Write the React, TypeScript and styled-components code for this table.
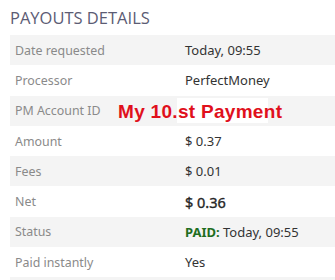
import React from "react";
import styled, { createGlobalStyle } from "styled-components";

const GlobalStyle = createGlobalStyle`
  body {
    margin: 0;
    background: #ffffff;
    font-family: "Noto Sans", "DejaVu Sans", sans-serif;
  }
`;

const Panel = styled.div`
  padding: 8px 0 0 10px;
  width: 335px;
  height: 280px;
  box-sizing: border-box;
  overflow: hidden;
`;

const Heading = styled.h2`
  margin: 0 0 7px 0;
  font-family: "Open Sans", "Noto Sans", sans-serif;
  font-weight: 400;
  font-size: 16.5px;
  line-height: 20px;
  color: #5c5c74;
`;

const Table = styled.div`
  display: flex;
  flex-direction: column;
`;

const Row = styled.div<{ $striped: boolean }>`
  position: relative;
  display: grid;
  grid-template-columns: 170px 1fr;
  height: 30.3px;
  align-items: center;
  background: ${(p) => (p.$striped ? "#f4f4f4" : "#ffffff")};
  font-size: 13px;
`;

const Label = styled.span`
  padding-left: 5px;
  color: #8a8a8a;
  font-size: 12.4px;
`;

const Value = styled.span<{ $strong?: boolean }>`
  padding-left: 5px;
  color: ${(p) => (p.$strong ? "#262626" : "#333333")};
  font-size: ${(p) => (p.$strong ? "14.5px" : "13px")};
  -webkit-text-stroke: ${(p) => (p.$strong ? "0.35px #262626" : "0")};
`;

const Paid = styled.b`
  color: #1f6e1f;
`;

const Erased = styled.div`
  position: absolute;
  left: 167px;
  top: 2px;
  width: 91px;
  height: 25px;
  background: #ffffff;
`;

const Stamp = styled.div`
  position: absolute;
  left: 108px;
  top: 5px;
  font-family: "Liberation Sans", sans-serif;
  font-weight: 700;
  font-size: 19px;
  color: #e0101c;
  white-space: nowrap;
  letter-spacing: 0.3px;
`;

type Item = { label: string; value: React.ReactNode; strong?: boolean };

const items: Item[] = [
  { label: "Date requested", value: "Today, 09:55" },
  { label: "Processor", value: "PerfectMoney" },
  { label: "PM Account ID", value: "" },
  { label: "Amount", value: "$ 0.37" },
  { label: "Fees", value: "$ 0.01" },
  { label: "Net", value: "$ 0.36", strong: true },
  {
    label: "Status",
    value: (
      <>
        <Paid>PAID:</Paid> Today, 09:55
      </>
    ),
  },
  { label: "Paid instantly", value: "Yes" },
  { label: "", value: "" },
];

const App: React.FC = () => {
  return (
    <>
      <GlobalStyle />
      <Panel>
        <Heading>PAYOUTS DETAILS</Heading>
        <Table>
          {items.map((item, i) => (
            <Row key={i} $striped={i % 2 === 0}>
              <Label>{item.label}</Label>
              <Value $strong={item.strong}>{item.value}</Value>
              {item.label === "PM Account ID" && (
                <>
                  <Erased />
                  <Stamp>My 10.st Payment</Stamp>
                </>
              )}
            </Row>
          ))}
        </Table>
      </Panel>
    </>
  );
};

export default App;
